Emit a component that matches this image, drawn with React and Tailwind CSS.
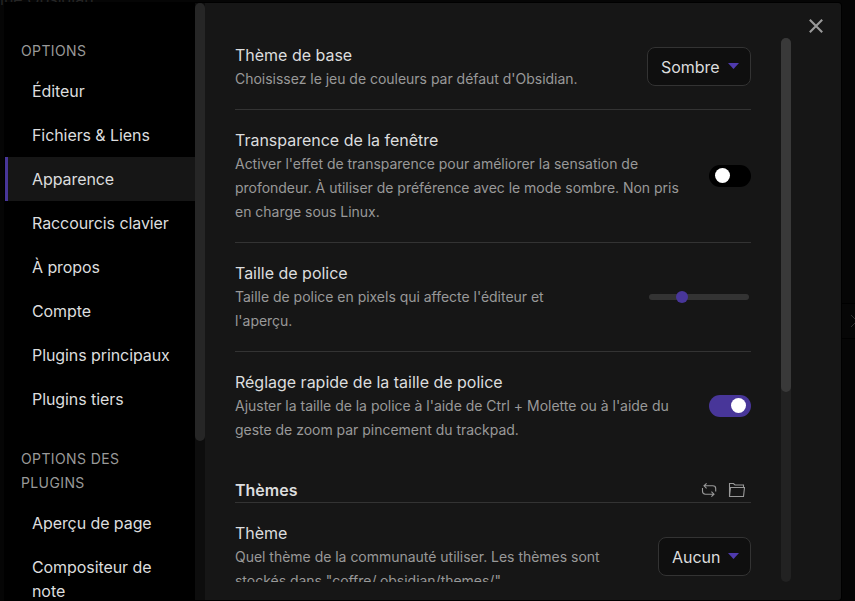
import React from 'react';

function NavItem({ children, active }) {
  return (
    <div
      className={
        'whitespace-nowrap border-l-[3px] py-[10px] pl-6 text-base leading-6 tracking-[-0.08px] ' +
        (active ? 'border-[#483699] bg-[#161616]' : 'border-transparent')
      }
    >
      {children}
    </div>
  );
}

function NavTitle({ children }) {
  return <div className="px-4 pb-[6px] text-sm leading-6 tracking-[0.38px] text-[#999999]">{children}</div>;
}

function Setting({ title, lines, children, first }) {
  return (
    <div
      className={
        'flex items-center justify-between pb-[18px] ' + (first ? 'pt-[5px]' : 'border-t border-[#333333] pt-[18px]')
      }
    >
      <div className="whitespace-nowrap">
        <div className="text-base leading-6 tracking-[-0.01px]">{title}</div>
        <div className="text-sm leading-6 tracking-[-0.02px] text-[#999999]">
          {lines.map((line) => (
            <div key={line}>{line}</div>
          ))}
        </div>
      </div>
      {children}
    </div>
  );
}

function Dropdown({ label, wide }) {
  return (
    <div
      className={
        'mb-[2px] flex h-[39px] shrink-0 items-center justify-between rounded-lg border border-[#333333] bg-[#0f0f0f] pl-[13px] pr-[11px] pt-px text-base tracking-[-0.05px] ' +
        (wide ? 'w-[104px]' : 'w-[93px]')
      }
    >
      {label}
      <svg width="11" height="7" viewBox="0 0 11 7" className="mb-px fill-[#4f3aae]">
        <path d="M0 0h11L5.5 6z" />
      </svg>
    </div>
  );
}

function Toggle({ on }) {
  return (
    <div
      className={
        'flex h-[22px] w-[42px] shrink-0 items-center rounded-full ' +
        (on ? 'justify-end bg-[#483699] pr-[5px]' : 'bg-black pl-[6px]')
      }
    >
      <div className="mb-px size-[15px] rounded-full bg-white" />
    </div>
  );
}

function Slider() {
  return (
    <div className="mr-[2px] flex h-3 w-[100px] shrink-0 items-center rounded-full">
      <div className="flex h-[6px] w-full items-center rounded-full bg-[#333333] pl-[27px]">
        <div className="size-3 shrink-0 rounded-full bg-[#483699]" />
      </div>
    </div>
  );
}

function ReloadIcon() {
  return (
    <svg width="16" height="16" viewBox="0 0 16 16" fill="none" stroke="#999999" strokeWidth="1.1">
      <path d="M3 3.8h8.7q3 0 3 2.7v3M5.6 1.3 3 3.8l2.6 2.5M1.5 6v3.3q0 2.9 3 2.9H13M10.4 9.7l2.6 2.5-2.6 2.5" />
    </svg>
  );
}

function FolderIcon() {
  return (
    <svg width="17" height="16" viewBox="0 0 17 16" fill="none" stroke="#999999" strokeWidth="1.1">
      <path d="M1.5 14.5v-13h4L7 3h8.5v2.5M1.5 14.5 2.5 5.5h14l-1 9z" />
    </svg>
  );
}

export default function App() {
  return (
    <div className="relative h-[601px] w-[855px] overflow-hidden bg-[#050505] pl-[5px] pt-[3px] font-['Inter',sans-serif] text-[#dcddde]">
      <div className="absolute left-0 top-[-11px] whitespace-nowrap text-base leading-5 text-[#262626]">ine Obsidian</div>
      <div className="absolute left-[841px] top-[303px] flex h-[36px] w-[14px] items-center border-y border-black bg-[#060606] pl-[10px]">
        <svg width="8" height="12" viewBox="0 0 8 12" className="shrink-0" fill="none" stroke="#303030">
          <path d="m0 0 6 6-6 6" />
        </svg>
      </div>
      <div className="relative flex h-[597px] w-[836px] overflow-hidden rounded-r-[3px] bg-[#161616] shadow-[0_0_0_1px_#000]">
        <nav className="flex h-full w-[190px] shrink-0 flex-col bg-black pt-9">
          <NavTitle>OPTIONS</NavTitle>
          <NavItem>Éditeur</NavItem>
          <NavItem>Fichiers &amp; Liens</NavItem>
          <NavItem active>Apparence</NavItem>
          <NavItem>Raccourcis clavier</NavItem>
          <NavItem>À propos</NavItem>
          <NavItem>Compte</NavItem>
          <NavItem>Plugins principaux</NavItem>
          <NavItem>Plugins tiers</NavItem>
          <div className="h-[26px] shrink-0" />
          <NavTitle>
            OPTIONS DES
            <br />
            PLUGINS
          </NavTitle>
          <NavItem>Aperçu de page</NavItem>
          <NavItem>
            Compositeur de
            <br />
            note
          </NavItem>
        </nav>
        <div className="w-[10px] shrink-0 bg-[#0d0d0d]">
          <div className="h-[438px] rounded-full bg-[#262626]" />
        </div>
        <main className="mt-[35px] h-[544px] w-[546px] shrink-0 overflow-hidden pl-[30px]">
          <Setting first title="Thème de base" lines={["Choisissez le jeu de couleurs par défaut d'Obsidian."]}>
            <Dropdown wide label="Sombre" />
          </Setting>
          <Setting
            title="Transparence de la fenêtre"
            lines={[
              "Activer l'effet de transparence pour améliorer la sensation de",
              'profondeur. À utiliser de préférence avec le mode sombre. Non pris',
              'en charge sous Linux.',
            ]}
          >
            <Toggle />
          </Setting>
          <Setting title="Taille de police" lines={["Taille de police en pixels qui affecte l'éditeur et", "l'aperçu."]}>
            <Slider />
          </Setting>
          <Setting
            title="Réglage rapide de la taille de police"
            lines={[
              "Ajuster la taille de la police à l'aide de Ctrl + Molette ou à l'aide du",
              'geste de zoom par pincement du trackpad.',
            ]}
          >
            <Toggle on />
          </Setting>
          <div className="mt-[18px] flex h-6 items-center justify-between pr-[5px]">
            <h2 className="text-base font-semibold leading-6">Thèmes</h2>
            <div className="flex items-center gap-[11px] pr-px">
              <ReloadIcon />
              <FolderIcon />
            </div>
          </div>
          <Setting
            title="Thème"
            lines={['Quel thème de la communauté utiliser. Les thèmes sont', 'stockés dans "coffre/.obsidian/themes/".']}
          >
            <Dropdown label="Aucun" />
          </Setting>
        </main>
        <div className="ml-[30px] mt-[35px] h-[544px] w-[10px] shrink-0 rounded-full bg-[#222222]">
          <div className="h-[354px] rounded-full bg-[#393939]" />
        </div>
        <div className="ml-[18px] mt-[15.5px] shrink-0">
          <svg width="14" height="14" viewBox="0 0 14 14" stroke="#999999" strokeWidth="2.1" className="overflow-visible">
            <path d="M.8.8l12.4 12.4M13.2.8.8 13.2" />
          </svg>
        </div>
      </div>
    </div>
  );
}
